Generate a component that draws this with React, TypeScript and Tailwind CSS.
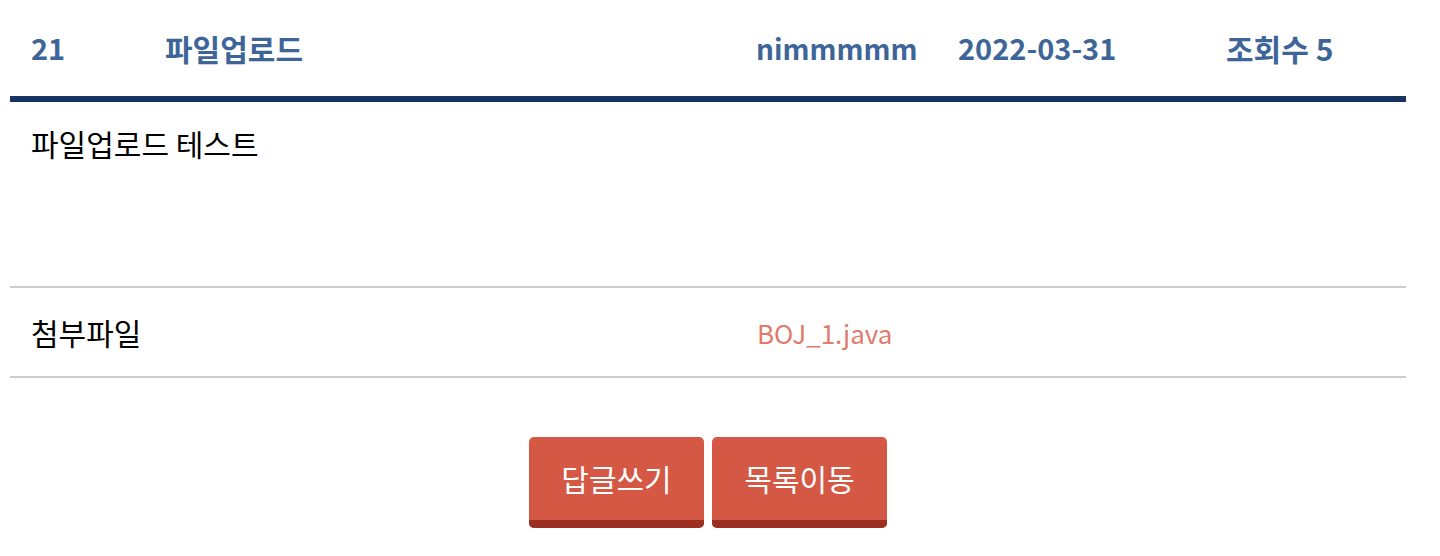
import React from 'react';

const post = {
  no: 21,
  title: '파일업로드',
  writer: 'nimmmmm',
  date: '2022-03-31',
  views: 5,
  content: '파일업로드 테스트',
  file: 'BOJ_1.java',
};

const font = "font-['Noto_Sans_CJK_KR','Noto_Sans',sans-serif]";

const ActionButton: React.FC<{ label: string }> = ({ label }) => (
  <button className="w-[175px] h-[91px] rounded-[5px] overflow-hidden flex flex-col bg-[#d55845] text-white">
    <span className="flex-1 flex items-center justify-center text-[30px]">{label}</span>
    <span className="h-[8px] bg-[#9b2f21]" />
  </button>
);

export default function App() {
  return (
    <div className={`${font} bg-white w-[1440px] h-[556px] px-[10px] pr-[34px]`}>
      {/* header */}
      <div className="flex items-center h-[102px] font-bold text-[#3e6597] border-b-[6px] border-[#173460]">
        <div className="w-[155px] pl-[21px] text-[29px]">{post.no}</div>
        <div className="flex-1 text-[30px]">{post.title}</div>
        <div className="w-[202px] text-[28px]">{post.writer}</div>
        <div className="w-[268px] text-[29px]">{post.date}</div>
        <div className="w-[180px] text-[30px]">조회수 {post.views}</div>
      </div>

      {/* content */}
      <div className="h-[186px] pt-[19px] pl-[21px] text-[30px] text-black border-b-2 border-[#cccccc]">
        {post.content}
      </div>

      {/* attachment */}
      <div className="flex items-center h-[90px] border-b-2 border-[#cccccc]">
        <div className="w-[747px] pl-[21px] text-[30px] text-black">첨부파일</div>
        <a className="text-[26px] text-[#e07b6b]">{post.file}</a>
      </div>

      <div className="flex justify-center gap-[8px] mt-[59px]">
        <ActionButton label="답글쓰기" />
        <ActionButton label="목록이동" />
      </div>
    </div>
  );
}
